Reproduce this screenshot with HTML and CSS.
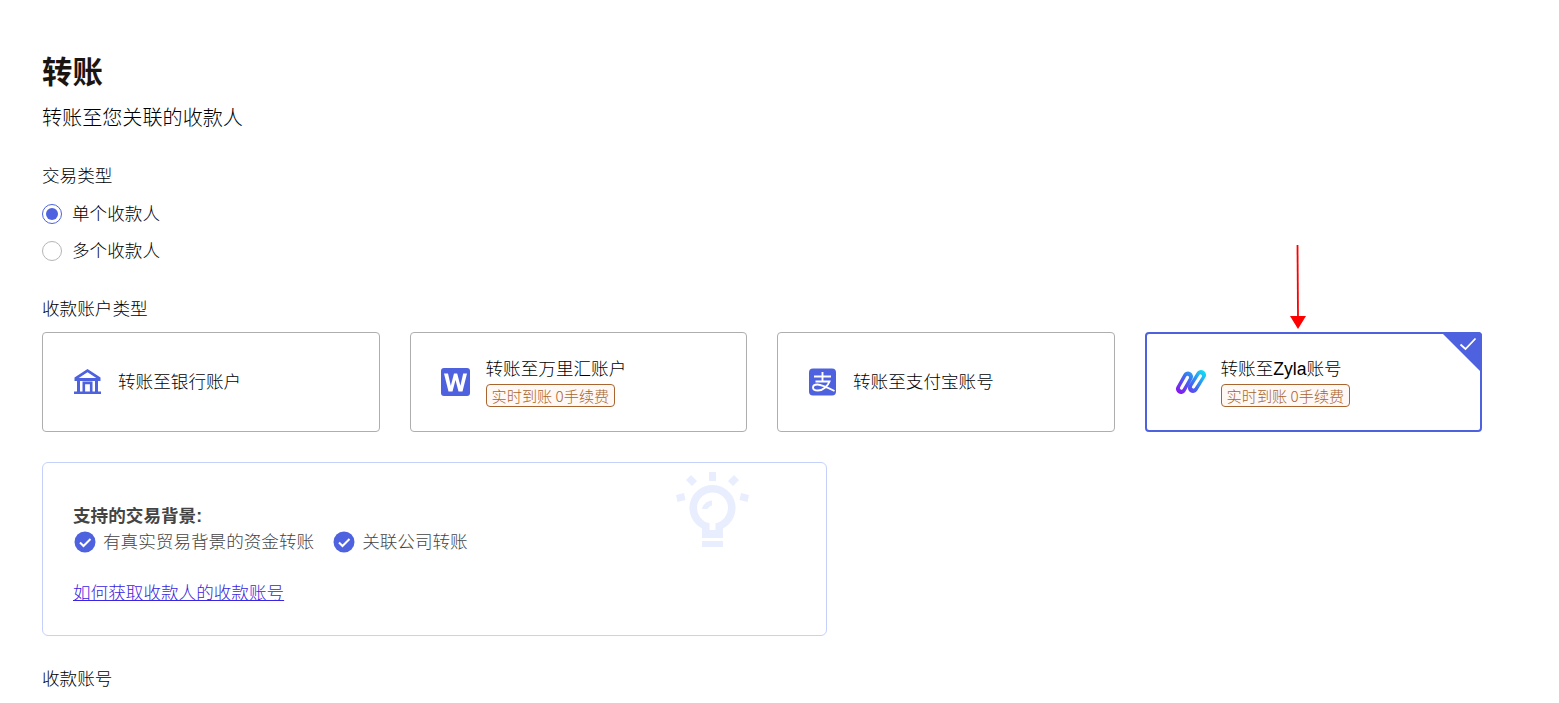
FILE: index.html
```html
<!DOCTYPE html>
<html lang="zh-CN">
<head>
<meta charset="utf-8">
<title>转账</title>
<link rel="stylesheet" href="styles.css">
</head>
<body>
<main class="page">
  <h1 class="title">转账</h1>
  <p class="subtitle">转账至您关联的收款人</p>

  <div class="label label-type">交易类型</div>
  <div class="radio-row radio-first"><span class="radio radio-on"></span><span>单个收款人</span></div>
  <div class="radio-row"><span class="radio"></span><span>多个收款人</span></div>

  <div class="label label-account">收款账户类型</div>
  <div class="cards">
    <div class="card">
      <svg class="card-icon" viewBox="0 0 30 30"><g fill="#4e62e0"><path d="M14.500 2 1.500 10.500V14h26v-3.500L14.500 2zm0 3.200 8.800 5.800H5.700l8.800-5.800z"/><path d="M4 13h3v12H4zM22 13h3v12h-3zM9.500 14.500h10V25h-2.600v-7.800h-4.800V25H9.500zM1 24.500h27V27H1z"/></g></svg>
      <div class="card-text"><div>转账至银行账户</div></div>
    </div>
    <div class="card">
      <svg class="card-icon" viewBox="0 0 30 30"><rect x="0" y="1" width="29" height="28" rx="3" fill="#4e62e0"/><path d="M3 6.500h4l2.800 12.300L13 6.500h3.200l3.200 12.300 2.800-12.300H26l-4.500 18h-4l-3-11.500-3 11.500h-4z" fill="#fff"/></svg>
      <div class="card-text"><div>转账至万里汇账户</div><span class="tag">实时到账 0手续费</span></div>
    </div>
    <div class="card">
      <svg class="card-icon" viewBox="0 0 30 30"><rect x="1" y="1.500" width="27" height="27" rx="4" fill="#4e62e0"/><path d="M6 9.500h17M14.500 5v9.500M7.500 14.500h14c-1.500 4-6 9-11.500 9-3 0-5-1-5-3s2-3 4.500-3c4 0 9 2.500 17 6.500" fill="none" stroke="#fff" stroke-width="1.900"/></svg>
      <div class="card-text"><div>转账至支付宝账号</div></div>
    </div>
    <div class="card card-active">
      <svg class="card-icon" viewBox="0 0 30 30"><defs><linearGradient id="zyla" gradientUnits="userSpaceOnUse" x1="3" y1="27" x2="27" y2="3"><stop offset="0" stop-color="#8a12f0"/><stop offset=".5" stop-color="#3f6cf2"/><stop offset="1" stop-color="#0ee0f5"/></linearGradient></defs><path d="M5 22 12 9.500M17 21 25 8" fill="none" stroke="url(#zyla)" stroke-width="10" stroke-linecap="round"/><path d="M5.500 21 11.500 10.500M17.500 20 24.500 9" fill="none" stroke="#fff" stroke-width="3.200" stroke-linecap="round"/></svg>
      <div class="card-text"><div>转账至Zyla账号</div><span class="tag">实时到账 0手续费</span></div>
      <span class="corner"></span>
      <svg class="corner-check" viewBox="0 0 18 14"><path d="M1.500 7.500 6.500 12 16.500 1.500" fill="none" stroke="#fff" stroke-width="1.800"/></svg>
    </div>
  </div>

  <section class="info">
    <svg class="bulb" viewBox="0 0 74 76"><g fill="#e9eefe"><path d="M34 0h7v9h-7zM11 8l5-5 6 6-5 5zM64 8l-5-5-6 6 5 5zM1 23l8-2 1.500 7-8 2zM74 23l-8-2-1.500 7 8 2zM27 69h21v6H27z"/><path d="M37.500 13a23 23 0 0 0-10.500 43.500V66h21v-9.500A23 23 0 0 0 37.500 13zm0 7.500a15.500 15.500 0 0 1 3 30.700V58h-6v-6.800a15.500 15.500 0 0 1 3-30.700z" fill-rule="evenodd"/><path d="M27 37c.500-4 4.500-8 10-8.500v5c-2 .500-4 2-4.500 3.500z"/></g></svg>
    <div class="info-title">支持的交易背景:</div>
    <div class="info-list">
      <span class="info-item"><svg class="check" viewBox="0 0 22 22"><circle cx="11" cy="11" r="10.500" fill="#4e62e0"/><path d="M6 11.500l3.500 3.500L16.500 8" fill="none" stroke="#fff" stroke-width="2"/></svg>有真实贸易背景的资金转账</span>
      <span class="info-item"><svg class="check" viewBox="0 0 22 22"><circle cx="11" cy="11" r="10.500" fill="#4e62e0"/><path d="M6 11.500l3.500 3.500L16.500 8" fill="none" stroke="#fff" stroke-width="2"/></svg>关联公司转账</span>
    </div>
    <a class="info-link" href="#">如何获取收款人的收款账号</a>
  </section>

  <div class="label label-number">收款账号</div>
</main>
<svg class="arrow" viewBox="0 0 20 86"><path d="M9.500 0l.500 73" stroke="#f00" stroke-width="1.800" fill="none"/><path d="M2 71h16l-8 13z" fill="#f00"/></svg>
</body>
</html>
```
FILE: styles.css
```css
* { box-sizing: border-box; }
html, body { margin: 0; height: 100%; overflow: hidden; background: #fff; }
body {
  font-family: "Liberation Sans", "Noto Sans CJK SC", sans-serif;
  font-size: 17.6px;
  font-weight: 300;
  line-height: 26px;
  color: #000;
}
.page { padding: 51px 77px 0 42px; }
.title { margin: 0; font-size: 30.4px; line-height: 42px; font-weight: 700; color: #1b1512; }
.subtitle { margin: 10px 0 0; font-size: 20.1px; line-height: 30px; }
.label-type { margin-top: 30px; }
.radio-row { display: flex; align-items: center; gap: 10px; height: 26px; margin-top: 11px; }
.radio-first { margin-top: 12px; }
.radio { width: 20px; height: 20px; border: 1px solid #b5b5b5; border-radius: 50%; flex: none; }
.radio-on { border-color: #4e62e0; position: relative; }
.radio-on::after { content: ""; position: absolute; inset: 3px; border-radius: 50%; background: #4e62e0; }
.label-account { margin-top: 32px; }
.cards { display: grid; grid-template-columns: repeat(4, 1fr); gap: 30px; margin-top: 10px; }
.card {
  position: relative;
  display: flex;
  align-items: center;
  gap: 15px;
  height: 100px;
  padding: 0 30px;
  border: 1px solid #aeaeae;
  border-radius: 4px;
}
.card-icon { width: 30px; height: 30px; flex: none; }
.card-text { display: flex; flex-direction: column; align-items: flex-start; margin-top: -1px; }
.tag {
  height: 23px;
  margin-top: 2px;
  padding: 0 5px;
  font-family: "Noto Sans CJK SC", sans-serif;
  font-size: 15.2px;
  line-height: 21px;
  color: #a8652f;
  background: #fff8f4;
  border: 1px solid #a8652f;
  border-radius: 4px;
}
.card-active { border: 2px solid #4e62e0; padding: 0 29px; }
.corner {
  position: absolute; top: -2px; right: -2px;
  width: 41px; height: 41px;
  background: #4e62e0;
  clip-path: polygon(0 0, 100% 0, 100% 100%);
  border-top-right-radius: 4px;
}
.corner-check { position: absolute; top: 3px; right: 3px; width: 18px; height: 14px; }
.info {
  position: relative;
  width: 785px;
  height: 174px;
  margin-top: 30px;
  padding: 40px 30px 0;
  border: 1px solid #c6d1fb;
  border-radius: 6px;
  color: #444;
}
.bulb { position: absolute; top: 9px; left: 632px; width: 74px; height: 76px; }
.info-title { font-weight: 700; line-height: 26px; }
.info-list { display: flex; gap: 18px; line-height: 26px; }
.info-item { display: flex; align-items: center; gap: 7px; }
.check { width: 22px; height: 22px; flex: none; margin-left: 1px; }
.info-link { display: inline-block; margin-top: 25px; color: #3a25e0; }
.label-number { margin-top: 30px; }
.arrow { position: absolute; top: 245px; left: 1288px; width: 20px; height: 86px; }
```
